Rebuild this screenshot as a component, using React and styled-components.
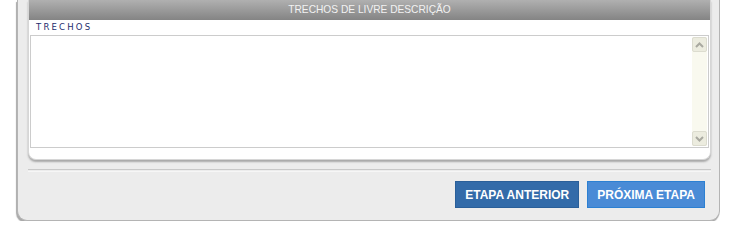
import React from 'react';
import styled, { createGlobalStyle } from 'styled-components';

const GlobalStyle = createGlobalStyle`
  html, body {
    margin: 0;
    padding: 0;
    background: #ffffff;
    font-family: "Liberation Sans", Arial, sans-serif;
  }
`;

const Panel = styled.div`
  box-sizing: border-box;
  width: 703px;
  margin-left: 17px;
  padding: 0 8px 11px 10px;
  background: #ececec;
  border: 1px solid #b4b4b4;
  border-top: none;
  border-radius: 0 0 10px 10px;
  box-shadow: -1px 2px 1px #a9a9a9;
`;

const Card = styled.div`
  background: #ffffff;
  border: 1px solid #d6d6d6;
  border-top: none;
  border-radius: 0 0 8px 8px;
  box-shadow: 0 2px 2px #a8a8a8;
  padding: 0 1px 11px;
`;

const Header = styled.div`
  height: 20px;
  margin: 0 -1px;
  background: linear-gradient(#b0b0b0, #848484);
  color: #f2f2f2;
  font-size: 10.2px;
  line-height: 20px;
  text-align: center;
`;

const Label = styled.div`
  padding: 2px 0 0 6px;
  height: 13px;
  font-family: "DejaVu Sans", Verdana, sans-serif;
  font-size: 8.5px;
  letter-spacing: 2.2px;
  line-height: 11px;
  color: #1d2d6e;
`;

const Field = styled.div`
  display: flex;
  height: 113px;
  border: 1px solid #cccccc;
  box-sizing: border-box;
`;

const Input = styled.textarea`
  flex: 1;
  border: none;
  outline: none;
  resize: none;
  padding: 2px 4px;
  font-family: "Liberation Sans", Arial, sans-serif;
  font-size: 12px;
`;

const ScrollTrack = styled.div`
  width: 15px;
  margin: 1px 1px 1px 0;
  background: #f9f9ef;
  display: flex;
  flex-direction: column;
  justify-content: space-between;
`;

const ScrollButton = styled.div`
  box-sizing: border-box;
  height: 15px;
  background: #ececdf;
  border: 1px solid #dcdccf;
  border-radius: 2px;
  display: flex;
  align-items: center;
  justify-content: center;
  color: #a9a9a0;
`;

const Divider = styled.div`
  margin-top: 9px;
  height: 1px;
  border-top: 1px solid #c8c8c8;
  border-bottom: 1px solid #f6f6f6;
`;

const Actions = styled.div`
  display: flex;
  justify-content: flex-end;
  gap: 8px;
  padding: 9px 6px 1px 0;
`;

const Button = styled.button`
  height: 27px;
  padding: 0 9px;
  border: 1px solid ${p => (p.primary ? '#2c80d2' : '#2a5f99')};
  background: ${p => (p.primary ? '#4a8bd6' : '#336ba9')};
  color: #ffffff;
  font-family: "Liberation Sans", Arial, sans-serif;
  font-weight: bold;
  font-size: 12px;
  cursor: pointer;
`;

function Chevron({ up }) {
  return (
    <svg width="9" height="6" viewBox="0 0 9 6">
      <polyline
        points={up ? '1 5 4.5 1.5 8 5' : '1 1 4.5 4.5 8 1'}
        fill="none"
        stroke="currentColor"
        strokeWidth="2"
      />
    </svg>
  );
}

export default function App() {
  return (
    <>
      <GlobalStyle />
      <Panel>
        <Card>
          <Header>TRECHOS DE LIVRE DESCRIÇÃO</Header>
          <Label>TRECHOS</Label>
          <Field>
            <Input />
            <ScrollTrack>
              <ScrollButton>
                <Chevron up />
              </ScrollButton>
              <ScrollButton>
                <Chevron />
              </ScrollButton>
            </ScrollTrack>
          </Field>
        </Card>
        <Divider />
        <Actions>
          <Button>ETAPA ANTERIOR</Button>
          <Button primary>PRÓXIMA ETAPA</Button>
        </Actions>
      </Panel>
    </>
  );
}
